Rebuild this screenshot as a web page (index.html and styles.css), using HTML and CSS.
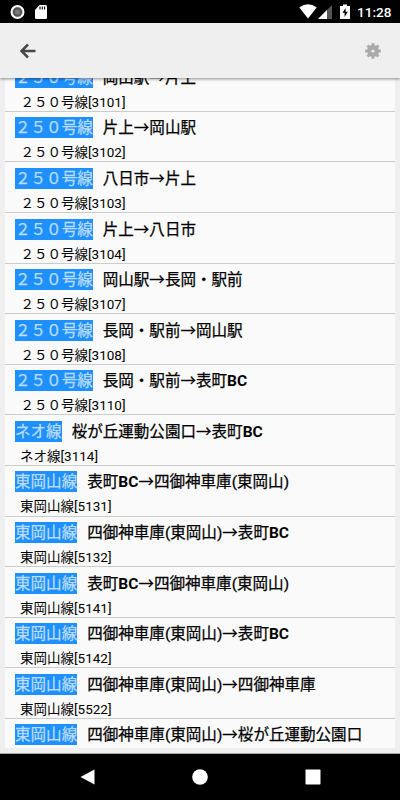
FILE: index.html
```
<!DOCTYPE html>
<html lang="ja">
<head>
    <meta charset="UTF-8">
    <meta name="viewport" content="width=device-width, initial-scale=1.0">
    <title>路線一覧</title>
    <link rel="stylesheet" href="styles.css">
</head>
<body>
    <div class="screen">
        <!-- ステータスバー -->
        <div class="status-bar">
            <svg class="status-left" width="38" height="16" viewBox="0 0 38 16">
                <circle cx="7.500" cy="8" r="7" fill="#fff"/>
                <circle cx="7.500" cy="8" r="4.500" fill="#555" stroke="#444" stroke-width=".7"/>
                <circle cx="7.500" cy="8" r="2.600" fill="#777"/>
                <path d="M35.500 1h-6l-4.500 5v7.500q0 1.500 1.500 1.500h9q1.500 0 1.500-1.500v-11q0-1.500-1.500-1.500z" fill="#fff"/>
                <path d="M30 2.500v3M32.300 2.500v3M34.600 2.500v3" stroke="#000" stroke-width="1.100"/>
            </svg>
            <div class="status-right">
                <svg width="52" height="16" viewBox="0 0 52 16">
                    <path d="M.3 3.500Q9-3 17.700 3.500L9 14.500z" fill="#fff"/>
                    <path d="M33 1v14H19z" fill="#555"/>
                    <path d="M28 6v9h-9z" fill="#fff"/>
                    <path d="M44 .5h4v1.500h3v13h-10v-13h3z" fill="#fff"/>
                    <path d="M46.500 4l-3 4.700h2.100v4.300l3.200-5.300h-2.200z" fill="#000"/>
                </svg>
                <span class="clock">11:28</span>
            </div>
        </div>

        <!-- ツールバー -->
        <div class="toolbar">
            <svg width="16" height="16" viewBox="0 0 16 16">
                <path d="M8 1.500L1.500 8l6.500 6.500M1.500 8h14" fill="none" stroke="#484848" stroke-width="2.500"/>
            </svg>
            <svg width="16" height="16" viewBox="0 0 16 16">
                <g stroke="#aaa" stroke-width="3">
                    <path d="M8 .2v15.600M.2 8h15.600M2.500 2.500l11 11M13.500 2.500l-11 11"/>
                </g>
                <circle cx="8" cy="8" r="6" fill="#aaa"/>
                <circle cx="8" cy="8" r="1.600" fill="#efefef"/>
            </svg>
        </div>

        <!-- 路線リスト -->
        <div class="list-area">
            <ul class="route-list">
                <li class="route"><div class="route-title"><span class="tag">２５０号線</span>岡山駅→片上</div><div class="route-sub wide">２５０号線[3101]</div></li>
                <li class="route"><div class="route-title"><span class="tag">２５０号線</span>片上→岡山駅</div><div class="route-sub wide">２５０号線[3102]</div></li>
                <li class="route"><div class="route-title"><span class="tag">２５０号線</span>八日市→片上</div><div class="route-sub wide">２５０号線[3103]</div></li>
                <li class="route"><div class="route-title"><span class="tag">２５０号線</span>片上→八日市</div><div class="route-sub wide">２５０号線[3104]</div></li>
                <li class="route"><div class="route-title"><span class="tag">２５０号線</span>岡山駅→長岡・駅前</div><div class="route-sub wide">２５０号線[3107]</div></li>
                <li class="route"><div class="route-title"><span class="tag">２５０号線</span>長岡・駅前→岡山駅</div><div class="route-sub wide">２５０号線[3108]</div></li>
                <li class="route"><div class="route-title"><span class="tag">２５０号線</span>長岡・駅前→表町<b>BC</b></div><div class="route-sub wide">２５０号線[3110]</div></li>
                <li class="route"><div class="route-title"><span class="tag">ネオ線</span>桜が丘運動公園口→表町<b>BC</b></div><div class="route-sub">ネオ線[3114]</div></li>
                <li class="route"><div class="route-title"><span class="tag">東岡山線</span>表町<b>BC</b>→四御神車庫(東岡山)</div><div class="route-sub">東岡山線[5131]</div></li>
                <li class="route"><div class="route-title"><span class="tag">東岡山線</span>四御神車庫(東岡山)→表町<b>BC</b></div><div class="route-sub">東岡山線[5132]</div></li>
                <li class="route"><div class="route-title"><span class="tag">東岡山線</span>表町<b>BC</b>→四御神車庫(東岡山)</div><div class="route-sub">東岡山線[5141]</div></li>
                <li class="route"><div class="route-title"><span class="tag">東岡山線</span>四御神車庫(東岡山)→表町<b>BC</b></div><div class="route-sub">東岡山線[5142]</div></li>
                <li class="route"><div class="route-title"><span class="tag">東岡山線</span>四御神車庫(東岡山)→四御神車庫</div><div class="route-sub">東岡山線[5522]</div></li>
                <li class="route"><div class="route-title"><span class="tag">東岡山線</span>四御神車庫(東岡山)→桜が丘運動公園口</div></li>
            </ul>
        </div>

        <!-- ナビゲーションバー -->
        <div class="nav-bar">
            <svg width="16" height="16" viewBox="0 0 16 16"><path d="M.5 8L14.500.5v15z" fill="#fff"/></svg>
            <svg width="16" height="16" viewBox="0 0 16 16"><circle cx="8" cy="8" r="7.800" fill="#fff"/></svg>
            <svg width="16" height="16" viewBox="0 0 16 16"><rect x=".5" y=".5" width="15" height="15" rx=".8" fill="#fff"/></svg>
        </div>
    </div>
</body>
</html>
```
FILE: styles.css
```
* {
    margin: 0;
    padding: 0;
    box-sizing: border-box;
}

body {
    font-family: Roboto, "Noto Sans CJK JP", sans-serif;
    background: #efefef;
    color: #000;
}

.screen {
    display: flex;
    flex-direction: column;
    width: 400px;
    height: 800px;
    overflow: hidden;
}

.status-bar {
    display: flex;
    justify-content: space-between;
    align-items: center;
    height: 23px;
    padding: 0 8.5px 0 10px;
    background: #000;
}

.status-right {
    display: flex;
    align-items: center;
    gap: 6px;
}

.clock {
    color: #fff;
    font-size: 13.6px;
    font-weight: 500;
    line-height: 22px;
}

.toolbar {
    display: flex;
    justify-content: space-between;
    align-items: center;
    position: relative;
    z-index: 1;
    height: 55px;
    padding: 0 19.5px;
    background: #efefef;
    box-shadow: 0 1px 3px rgba(0,0,0,0.45);
}

.list-area {
    flex: 1;
    display: flex;
    padding: 0 5px 5px;
    border-bottom: 1px solid #aaa;
}

.route-list {
    flex: 1;
    display: flex;
    flex-direction: column;
    justify-content: flex-end;
    height: 670px;
    list-style: none;
    background: #fafafa;
    overflow: hidden;
}

.route {
    flex: none;
    height: 50.58px;
    padding: 5.5px 10px 0;
    border-bottom: 1px solid #ccc;
}

.route:last-child {
    height: 29.2px;
    border-bottom: none;
}

.route-title {
    display: flex;
    height: 21px;
    font-size: 15.55px;
    line-height: 23px;
    white-space: nowrap;
    -webkit-text-stroke: 0.25px currentColor;
}

.route-title b {
    font-weight: 700;
    -webkit-text-stroke: 0;
}

.tag {
    height: 21px;
    margin-right: 10px;
    background: #1e90ff;
    color: #bcddff;
}

.route-sub {
    margin-top: 4px;
    padding-left: 5px;
    font-size: 13.5px;
    line-height: 20px;
}

/* 全角数字の路線名 */
.route-sub.wide {
    padding-left: 5.5px;
}

.nav-bar {
    display: flex;
    justify-content: center;
    align-items: center;
    gap: 96.5px;
    height: 46px;
    background: #000;
}
```
